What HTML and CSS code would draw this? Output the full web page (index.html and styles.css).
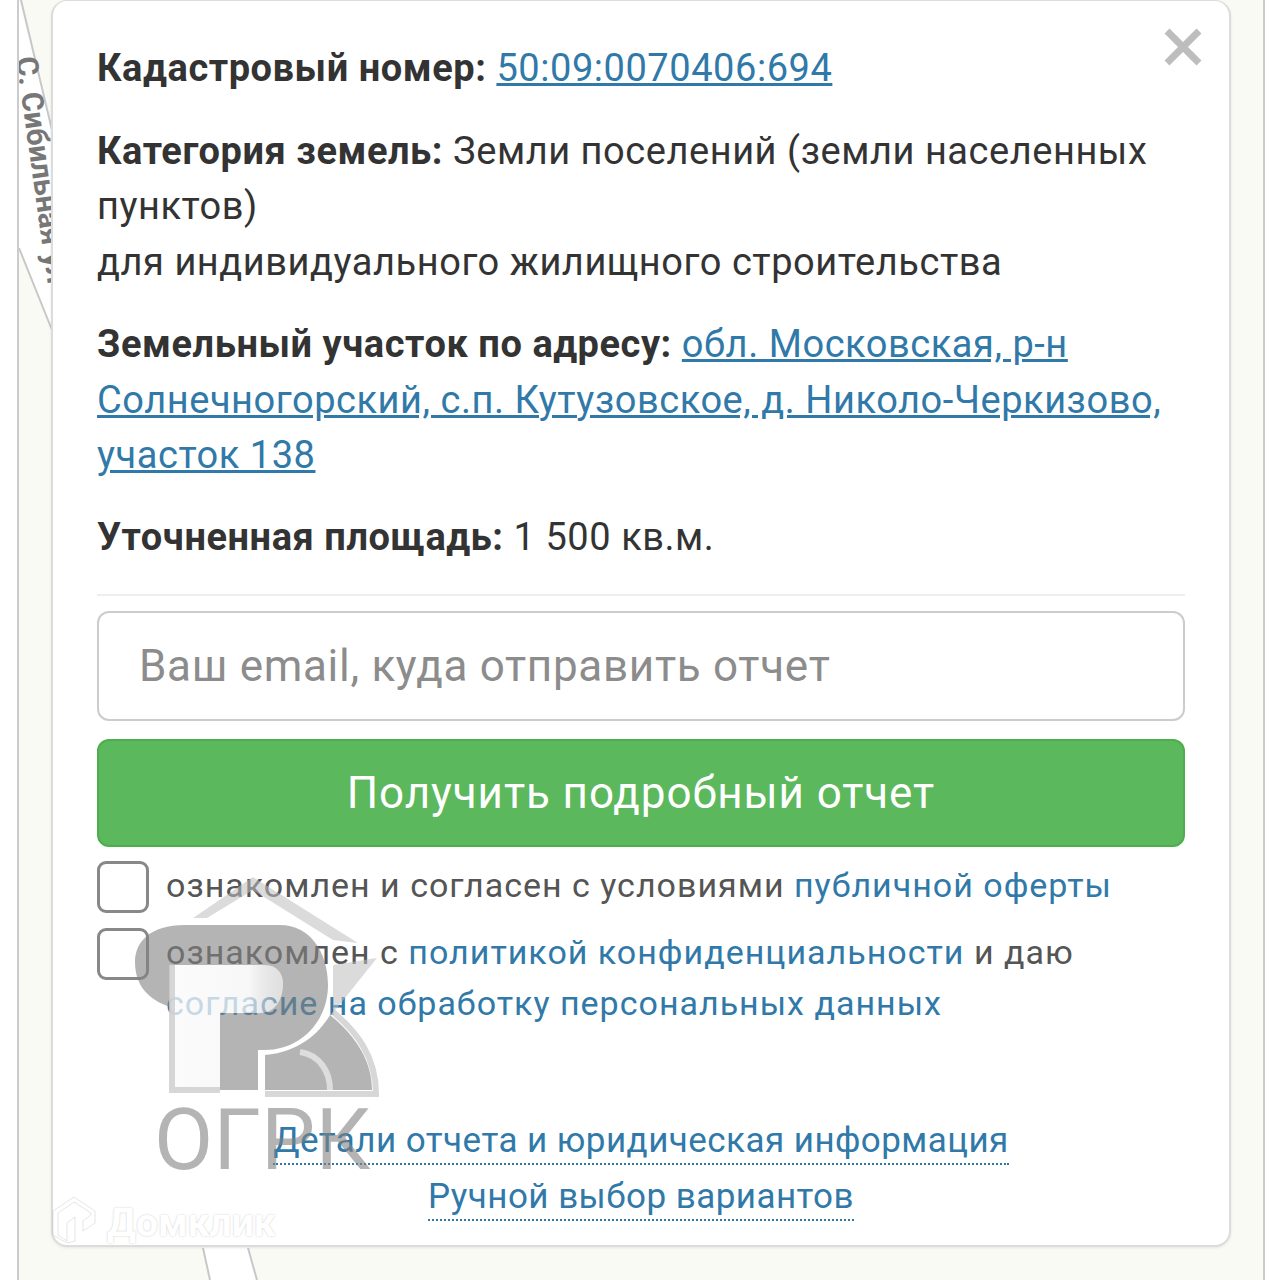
FILE: index.html
```html
<!DOCTYPE html>
<html lang="ru">
<head>
<meta charset="utf-8">
<title>Отчет</title>
<link rel="stylesheet" href="styles.css">
</head>
<body>
<div class="frame">
  <svg class="map" width="1280" height="1280" viewBox="0 0 1280 1280">
    <path class="road-fill" d="M19 0 L52 130 V330 L19 248 Z M203 1248 H248 L257 1280 H210 Z"/>
    <path class="road" d="M21 0 L52 130 M19 248 L52 330 M203 1248 L210 1280 M248 1248 L257 1280"/>
    <text class="street" transform="translate(16 58) rotate(82)">С. Сибильная ул</text>
  </svg>
  <main class="card">
    <button class="close" aria-label="Закрыть"><svg width="40" height="40" viewBox="0 0 40 40"><path d="M4 4 L36 36 M36 4 L4 36"/></svg></button>
    <p class="row lead"><b>Кадастровый номер:</b> <a href="#">50:09:0070406:694</a></p>
    <p class="row"><b>Категория земель:</b> Земли поселений (земли населенных пунктов)<br>для индивидуального жилищного строительства</p>
    <p class="row"><b>Земельный участок по адресу:</b> <a href="#">обл. Московская, р-н Солнечногорский, с.п. Кутузовское, д. Николо-Черкизово, участок 138</a></p>
    <p class="row"><b>Уточненная площадь:</b> 1 500 кв.м.</p>
    <hr class="rule">
    <input class="email" type="text" placeholder="Ваш email, куда отправить отчет">
    <button class="submit">Получить подробный отчет</button>
    <label class="agree first"><span class="box"></span><span class="agree-text">ознакомлен и согласен с условиями <a href="#">публичной оферты</a></span></label>
    <label class="agree"><span class="box"></span><span class="agree-text">ознакомлен с <a href="#">политикой конфиденциальности</a> и даю <a href="#">согласие на обработку персональных данных</a></span></label>
    <div class="more">
      <a class="dotted" href="#">Детали отчета и юридическая информация</a>
      <a class="dotted" href="#">Ручной выбор вариантов</a>
    </div>
  </main>
  <svg class="mark" width="260" height="310" viewBox="0 0 260 310">
    <defs>
      <linearGradient id="bowl" x1="0" x2="1" y1="0" y2="0">
        <stop offset="0" stop-color="#fafafa" stop-opacity=".75"/>
        <stop offset=".7" stop-color="#f5f5f5" stop-opacity=".75"/>
        <stop offset="1" stop-color="#bbb" stop-opacity=".45"/>
      </linearGradient>
    </defs>
    <path class="mark-light" d="M58 46 L118 5 L223 71 L198 68 L118 18 L72 46 Z"/>
    <path class="mark-light" d="M198 93 L242 86 L198 141 Z"/>
    <path class="mark-panel" d="M35 93 H130 C142 93 148 102 148 111 C148 128 140 141 125 141 H85 V218 H35 Z"/>
    <path class="mark-dark" d="M50 53 H145 C175 53 193 80 193 113 C193 150 165 178 130 178 H123 V218 H85 V141 H125 C140 141 148 128 148 111 C148 102 142 93 130 93 H35 V135 C15 128 0 115 0 90 C0 70 15 53 50 53 Z"/>
    <path class="mark-dark" d="M130 183 C165 180 185 160 195 143 C222 165 237 190 237 218 H130 Z"/>
    <path class="mark-edge" d="M37 93 V218 H85 M130 222 H241 C241 185 222 160 198 140"/>
    <path class="mark-arch" d="M165 180 C185 183 195 200 195 218"/>
    <text class="mark-text" x="19" y="297">ОГРК</text>
  </svg>
  <div class="domclick">
    <svg width="50" height="52" viewBox="0 0 50 52"><path d="M4 18 L25 4 L46 18 V30 L34 38 V28 L42 22 V20 L25 9 L9 20 V42 L18 48 V30 L26 24 V48 L18 50 L4 42 Z"/></svg>
    <span class="domclick-name">Домклик</span>
  </div>
</div>
</body>
</html>
```

FILE: styles.css
```css
html, body {
  margin: 0;
  padding: 0;
  background: #fff;
}
.frame {
  position: relative;
  box-sizing: border-box;
  width: 1248px;
  height: 1280px;
  margin-left: 17px;
  padding-left: 34px;
  background: #fafaf5;
  border-left: 2px solid #ccc;
  border-right: 2px solid #ccc;
  overflow: hidden;
  font-family: Roboto, "Noto Sans", sans-serif;
}
.map {
  position: absolute;
  left: -19px;
  top: 0;
}
.road {
  fill: none;
  stroke: #c8c8c8;
  stroke-width: 2;
}
.road-fill {
  fill: #fff;
}
.street {
  font: 700 30px Roboto, sans-serif;
  fill: #777;
}
.card {
  position: relative;
  box-sizing: border-box;
  width: 1180px;
  height: 1247px;
  margin-left: -2px;
  padding: 40px 44px 0;
  background: #fff;
  border: 2px solid #dcdcdc;
  border-top-width: 1px;
  border-radius: 16px;
  box-shadow: 0 1px 3px rgba(0, 0, 0, .08);
  color: #333;
  font-size: 38px;
  line-height: 55.7px;
  letter-spacing: .55px;
}
.row {
  margin: 0 0 26px;
}
.row.lead {
  margin-bottom: 27px;
}
.row b {
  font-weight: 700;
  color: #333;
}
a {
  color: #3079a8;
}
.close {
  position: absolute;
  right: 26px;
  top: 26px;
  width: 40px;
  height: 40px;
  padding: 0;
  border: 0;
  background: none;
}
.close path {
  stroke: #bdbdbd;
  stroke-width: 7;
  fill: none;
}
.rule {
  margin: 28px 0 15px;
  border: 0;
  border-top: 2px solid #eee;
}
.email {
  display: block;
  box-sizing: border-box;
  width: 100%;
  height: 110px;
  padding: 0 40px;
  border: 2.5px solid #ccc;
  border-radius: 12px;
  outline: 0;
  font: 44px Roboto, sans-serif;
  letter-spacing: .7px;
}
.email::placeholder {
  color: #8c8c8c;
  opacity: 1;
}
.submit {
  display: block;
  width: 100%;
  height: 108px;
  margin-top: 18px;
  border: 2px solid #4cae4c;
  border-radius: 12px;
  background: #5cb85c;
  color: #fff;
  font: 44px Roboto, sans-serif;
  letter-spacing: .9px;
}
.agree {
  display: flex;
  gap: 17px;
  font-size: 34px;
  line-height: 51px;
  letter-spacing: 1px;
  color: #555;
  margin-top: 15px;
}
.agree.first {
  margin-top: 14px;
}
.agree-text {
  margin-top: -1px;
}
.box {
  flex: none;
  box-sizing: border-box;
  width: 52px;
  height: 52px;
  border: 3px solid #888;
  border-radius: 9px;
  background: #fff;
}
.agree a {
  text-decoration: none;
}
.more {
  display: flex;
  flex-direction: column;
  align-items: center;
  margin-top: 90px;
}
.dotted {
  text-decoration: none;
  border-bottom: 2px dotted #3079a8;
  line-height: 44px;
  margin-bottom: 10px;
  font-size: 35px;
  letter-spacing: .45px;
}
.mark {
  position: absolute;
  left: 116px;
  top: 872px;
}
.mark-dark {
  fill: rgba(130, 130, 130, .6);
}
.mark-panel {
  fill: url(#bowl);
}
.mark-light {
  fill: rgba(190, 190, 190, .55);
}
.mark-edge {
  fill: none;
  stroke: rgba(205, 205, 205, .8);
  stroke-width: 6;
}
.mark-arch {
  fill: none;
  stroke: rgba(225, 225, 225, .9);
  stroke-width: 6;
}
.mark-text {
  font: 400 86px Roboto, sans-serif;
  fill: rgba(130, 130, 130, .6);
}
.domclick {
  position: absolute;
  left: 30px;
  top: 1192px;
  display: flex;
  align-items: center;
  gap: 8px;
  color: #fff;
  font: 700 39px Roboto, sans-serif;
  text-shadow: 0 0 2px rgba(0, 0, 0, .22);
}
.domclick-name {
  margin-top: 8px;
}
.domclick path {
  fill: #fff;
  stroke: rgba(0, 0, 0, .1);
  stroke-width: 1;
}
```
